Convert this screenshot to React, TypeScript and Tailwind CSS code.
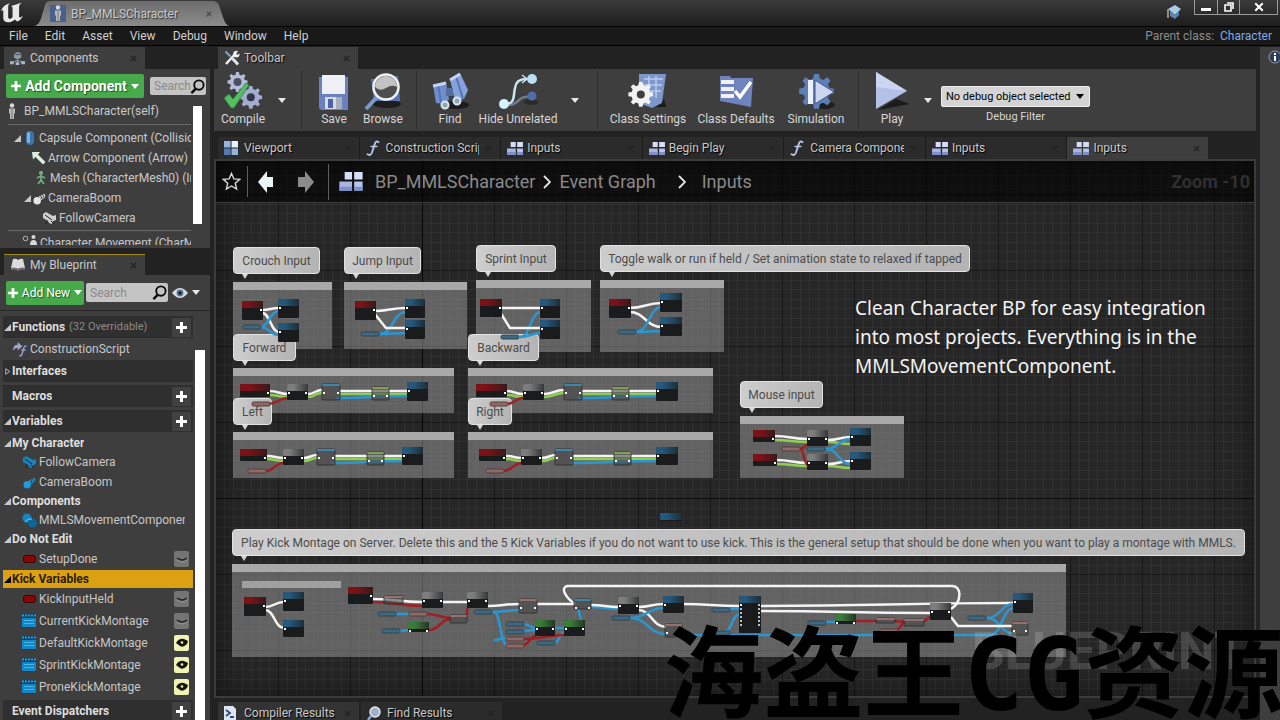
import type { ReactNode } from 'react'

type IconProps = { className?: string }

/* ---------- small icons ---------- */

function Caret({ className = 'w-2 h-[5px] text-gray-200' }: IconProps) {
  return (
    <svg viewBox="0 0 8 5" className={className} fill="currentColor">
      <path d="M0 0h8L4 5z" />
    </svg>
  )
}

function Cross({ className = 'w-[7px] h-[7px] text-[#222222]' }: IconProps) {
  return (
    <svg viewBox="0 0 8 8" className={className} stroke="currentColor" strokeWidth="1.6">
      <path d="M1 1l6 6M7 1L1 7" />
    </svg>
  )
}

function Plus({ className = 'w-[11px] h-[11px] text-white' }: IconProps) {
  return (
    <svg viewBox="0 0 11 11" className={className} fill="currentColor">
      <path d="M4 0h3v4h4v3H7v4H4V7H0V4h4z" />
    </svg>
  )
}

function Expander({ open = true, className = 'text-[#c8c8c8]' }: IconProps & { open?: boolean }) {
  return (
    <svg viewBox="0 0 8 8" className={`size-[7px] shrink-0 ${className}`}>
      {open ? (
        <path d="M8 0v8H0z" fill="currentColor" />
      ) : (
        <path d="M2 .8v6.400L6.500 4z" fill="none" stroke="currentColor" />
      )}
    </svg>
  )
}

function SearchIcon() {
  return (
    <svg viewBox="0 0 16 16" className="size-[15px] shrink-0" fill="none" stroke="#0a0a0a">
      <circle cx="9.500" cy="6.500" r="5" strokeWidth="2" />
      <path d="M6 10.500L1.500 15" strokeWidth="2.600" />
    </svg>
  )
}

function UnrealLogo() {
  return (
    <svg viewBox="0 0 22 20" className="h-[22px] w-6" fill="#e8e8e8">
      <path d="M1 8.500C1.500 5 5 2 9 1c-1.200 1-1.500 2-1.500 3.500v9c0 1.500 1.200 2.300 2.300 1.800.9-.4 1.700-1 1.700-2V5.500c0-1.200-.7-1.700-1.500-2C13 2.800 16.500 1.500 20 .5c-1.800 1.300-2.500 2.300-2.500 4v8.700c0 .8.8 1.200 1.500.8l2-1.500c-1.200 3-3 4.500-5.200 5.300l-2.300-1.900c-1.500 1.700-3.600 2.600-6 2.600-2.600-.2-4.500-1.600-4.500-3.800V8.300C3 7 1.800 7.300 1 8.500z" />
    </svg>
  )
}

function PawnIcon() {
  return (
    <svg viewBox="0 0 8 16" className="h-4 w-2 shrink-0">
      <circle cx="4" cy="2.500" r="2.200" fill="#d9d9d9" />
      <path d="M1 5.500h6v5H6V16H2v-5.500H1z" fill="#b9b9b9" />
      <path d="M4 5.500V16" stroke="#777" />
    </svg>
  )
}

function ComponentsIcon() {
  return (
    <svg viewBox="0 0 16 16" className="size-[15px]">
      <path d="M5 2l3-1 4 1v5L8 9 4 7z" fill="#8e99a8" />
      <path d="M5 3l3 1 4-1" stroke="#39424e" fill="none" />
      <path d="M8 9v4M8 10l-6 2M8 10l6 2" stroke="#9aa" fill="none" />
      <path d="M0 11h4v3H0zM6 12h4v3H6zM12 11h4v3h-4z" fill="#a9b7cb" />
    </svg>
  )
}

function BookIcon() {
  return (
    <svg viewBox="0 0 16 14" className="h-[14px] w-4">
      <path d="M3 1q3-1 5 1 3-2 5-1l2 9q-4-1-7 1-3-2-7-1z" fill="#dcdcdc" />
      <path d="M1 10q4-1 7 1 3-2 7-1v2q-4-1-7 1-3-2-7-1z" fill="#6f6f6f" />
    </svg>
  )
}

function ToolsIcon() {
  return (
    <svg viewBox="0 0 16 16" className="size-4">
      <path d="M2 14L12 3" stroke="#f1f1f1" strokeWidth="2.400" />
      <path d="M10 1.500q3-1.500 4 0l-2 2 1 1.500 2.500-1.500q.5 3-2.500 4-3 0-4-2 0-2.500 1-4z" fill="#f1f1f1" />
      <path d="M1.500 1.500l5 5" stroke="#7ba6de" strokeWidth="2" />
      <path d="M8.500 8.500l5.500 6" stroke="#dfe6f0" strokeWidth="3" />
    </svg>
  )
}

function ViewportIcon() {
  return (
    <svg viewBox="0 0 14 14" className="size-[14px]">
      <path d="M0 0h6.500v6.500H0zM7.500 7.500H14V14H7.500z" fill="#93b5dc" />
      <path d="M7.500 0H14v6.500H7.500z" fill="#eaf3fb" />
      <path d="M0 7.500h6.500V14H0z" fill="#5378b4" />
    </svg>
  )
}

function FunctionIcon({ className = 'h-4 w-[14px]' }: IconProps) {
  return (
    <svg viewBox="0 0 14 16" className={className} fill="none" stroke="#b7c6ee" strokeWidth="1.900" strokeLinecap="round">
      <path d="M12.500 2.200Q10 0 8.800 4L6 12.500Q4.500 16.200 1.500 14.300" />
      <path d="M5 6.500h6" strokeWidth="1.400" />
    </svg>
  )
}

function GraphIcon({ className = 'h-[13px] w-4' }: IconProps) {
  return (
    <svg viewBox="0 0 22 18" className={className}>
      <path d="M5 0h7v7H5zM14 0h8v7h-8z" fill="#d5def6" />
      <path d="M0 9h12v8H0z" fill="#a8b6e2" />
      <path d="M14 9h8v8h-8z" fill="#b9c6ec" />
      <path d="M0 14h12v4H0zM14 14h8v4h-8z" fill="#7f8fca" />
    </svg>
  )
}

function CapsuleIcon() {
  return (
    <svg viewBox="0 0 10 14" className="h-[14px] w-[10px] shrink-0">
      <rect x="1" y="0" width="8" height="14" rx="4" fill="#3b76ab" />
      <rect x="2" y="1" width="3" height="11" rx="1.500" fill="#7fb3dc" />
    </svg>
  )
}

function ArrowCompIcon() {
  return (
    <svg viewBox="0 0 14 13" className="h-[13px] w-[14px] shrink-0">
      <path d="M0 0h8L6 2.500 13.500 10 11 12.500 3.500 5 1 7.500z" fill="#d9efdc" />
    </svg>
  )
}

function MeshIcon() {
  return (
    <svg viewBox="0 0 10 14" className="h-[14px] w-[10px] shrink-0" stroke="#6fae7c" strokeWidth="1.800" fill="none">
      <circle cx="5" cy="2" r="1.200" fill="#9dd3a7" />
      <path d="M5 4v5L2 13M5 9l3 4M1 7l4-2 4 2" />
    </svg>
  )
}

function BoomIcon({ fill = '#e6e6e6' }: { fill?: string }) {
  return (
    <svg viewBox="0 0 14 14" className="size-[13px] shrink-0">
      <circle cx="4.500" cy="9.500" r="4" fill={fill} />
      <path d="M7 6l6-3" stroke={fill} strokeWidth="3" strokeDasharray="1.500 1" />
      <path d="M8 9l5-4" stroke={fill} />
    </svg>
  )
}

function CameraIcon({ fill = '#cfcfcf' }: { fill?: string }) {
  return (
    <svg viewBox="0 0 15 13" className="h-[13px] w-[15px] shrink-0">
      <path d="M1 2l3-2 7 4 3-1v5l-3 1-1 3-3-1-1-2-5-3z" fill={fill} />
      <path d="M3 3l7 5M5 8l-1 4M9 9l3 3" stroke="#222" />
    </svg>
  )
}

function MoveCompIcon({ fill = '#1486c4' }: { fill?: string }) {
  return (
    <svg viewBox="0 0 15 15" className="size-[15px] shrink-0">
      <circle cx="5" cy="5" r="4.500" fill={fill} />
      <circle cx="10.500" cy="10" r="4.500" fill="#0e6597" />
      <path d="M3 9q3-4 7-3" stroke="#79c5ee" fill="none" />
    </svg>
  )
}

function PersonIcon() {
  return (
    <svg viewBox="0 0 16 12" className="h-3 w-4 shrink-0">
      <circle cx="3.500" cy="3.500" r="2.300" fill="none" stroke="#b5b5b5" />
      <circle cx="11.500" cy="2" r="2" fill="#d8d8d8" />
      <path d="M8 10q0-5 3.500-5T15 10z" fill="#d8d8d8" />
    </svg>
  )
}

function BoolIcon() {
  return <span className="h-2 w-[13px] shrink-0 rounded-[3px] border border-[#3c0000] bg-[#8c0505]" />
}

function MontageIcon() {
  return (
    <svg viewBox="0 0 14 14" className="size-[14px] shrink-0">
      <rect width="14" height="14" fill="#0d3f5e" />
      <rect y="4" width="14" height="9" fill="#1188c8" />
      <path d="M2 6.500h10M2 9.500h10" stroke="#4cb1e4" />
      <path d="M0 1.500h14" stroke="#2a9bd6" strokeWidth="2" strokeDasharray="2 1" />
    </svg>
  )
}

function ConstructionIcon() {
  return (
    <svg viewBox="0 0 16 16" className="size-[15px] shrink-0" fill="none">
      <path d="M0 9q0-6 5-6V0l5 4.500L5 9V6Q2 6 0 9z" fill="#9fa8c9" />
      <path d="M14.500 4.500q-2-1-3 2l-1.800 6q-.7 3-3 2M9 8.500h4.500" stroke="#8fa3e0" strokeWidth="1.500" />
    </svg>
  )
}

function EyeIcon() {
  return (
    <svg viewBox="0 0 16 12" className="h-3 w-4">
      <path d="M0 6q8-10 16 0q-8 10-16 0z" fill="#d6dbe2" />
      <circle cx="8" cy="6" r="3.400" fill="#4f7396" />
      <circle cx="8" cy="6" r="1.500" fill="#111" />
    </svg>
  )
}

function VisibilityToggle({ on, name }: { on: boolean; name: string }) {
  return (
    <button
      aria-label={`${name} visibility`}
      className={`flex h-4 w-[15px] items-center justify-center rounded-[2px] ${on ? 'bg-[#f1f3b5]' : 'bg-[#747474]'}`}
    >
      {on ? (
        <svg viewBox="0 0 12 10" className="h-[10px] w-3">
          <path d="M0 5q3-5 8-4l4 2-1 3q-4 4-7 2z" fill="#15150c" />
          <circle cx="6" cy="4.500" r="1.300" fill="#f1f3b5" />
        </svg>
      ) : (
        <svg viewBox="0 0 12 10" className="h-[10px] w-3" fill="none">
          <path d="M1 4q5 4 10 0" stroke="#222" strokeWidth="1.500" />
          <path d="M1 6q5 4 10 0" stroke="#999" />
        </svg>
      )}
    </button>
  )
}

/* ---------- toolbar icons ---------- */

const GEAR =
  'M8.500 0h3l.6 2.800 2 .8L16.500 2l2 2-1.600 2.400.8 2 2.800.6v3l-2.800.6-.8 2 1.600 2.400-2 2-2.400-1.600-2 .8-.6 2.800h-3l-.6-2.800-2-.8L3.500 19l-2-2 1.600-2.400-.8-2L-.5 12V9l2.800-.6.8-2L1.500 4l2-2 2.400 1.600 2-.8z'

function CompileIcon() {
  return (
    <svg viewBox="0 0 40 40" className="size-10">
      <path d={GEAR} transform="translate(5 1) scale(.95)" fill="#b5bcda" />
      <circle cx="14.500" cy="11" r="4" fill="#4a4f63" />
      <path d={GEAR} transform="translate(17 15) scale(1.080)" fill="#a4acd0" />
      <circle cx="27.800" cy="26.300" r="4" fill="#33374a" />
      <path d="M1 27l5-4 4 5L23 12l3 2-15 23H8z" fill="#55bd62" stroke="#2b7a37" strokeWidth=".7" />
    </svg>
  )
}

function SaveIcon() {
  return (
    <svg viewBox="0 0 40 40" className="size-10">
      <path d="M5 4h28l1 1v34H7l-2-2z" fill="#6a81bf" />
      <path d="M8 4h23v19H8z" fill="#eef0f5" />
      <path d="M11 26h17v12H11z" fill="#d8dbe5" />
      <path d="M14 28h5v9h-5z" fill="#4d64a8" />
      <path d="M22 26h6v12h-6z" fill="#a9aebd" />
      <path d="M5 5h3M31 5h3" stroke="#33406e" strokeWidth="2" />
    </svg>
  )
}

function BrowseIcon() {
  return (
    <svg viewBox="0 0 40 40" className="size-10">
      <ellipse cx="24" cy="33" rx="14" ry="4" fill="#1d1d1d" />
      <path d="M8 8h5l2-3h20l2 25H11z" fill="#5a76b2" />
      <path d="M14 26L3 38" stroke="#7d98cf" strokeWidth="4" />
      <circle cx="23" cy="16" r="12.500" fill="#4e4e4e" stroke="#f2f2f2" strokeWidth="2.500" />
      <path d="M12 16a11 11 0 0 1 22 0q-5-3-11 1t-11-1z" fill="#c3c3c3" />
    </svg>
  )
}

function FindIcon() {
  return (
    <svg viewBox="0 0 40 40" className="size-10">
      <ellipse cx="26" cy="34" rx="13" ry="4" fill="#1d1d1d" />
      <path d="M3 14l13-3 3 17-4 5-9-1z" fill="#6f8ece" />
      <path d="M20 8l10-6 8 17-4 9-9 2z" fill="#86a2dc" />
      <path d="M8 13l3 19M26 5l7 23" stroke="#5674b5" strokeWidth="2" />
      <path d="M3 15l13-3M20 9l10-6" stroke="#c5d4f2" strokeWidth="3" />
      <path d="M16 17h7v8h-7z" fill="#55709f" />
      <circle cx="15" cy="34" r="3.500" fill="#8aa" stroke="#dce6f5" strokeWidth="2" />
      <circle cx="27" cy="30" r="3.500" fill="#8aa" stroke="#dce6f5" strokeWidth="2" />
    </svg>
  )
}

function HideIcon() {
  return (
    <svg viewBox="0 0 40 40" className="size-10" fill="none">
      <ellipse cx="33" cy="31" rx="7" ry="3" fill="#2a2a2a" />
      <path d="M8 34q10 0 14-6 4-3 10-2" stroke="#6b7f93" strokeWidth="2.500" />
      <path d="M7 33C18 33 15 24 17 17Q18 8 28 8" stroke="#c9e5f1" strokeWidth="2.500" />
      <path d="M24 4l5 4-5 4" stroke="#c9e5f1" strokeWidth="1.500" />
      <circle cx="6" cy="33" r="5" fill="#d5f1fa" />
      <circle cx="34" cy="8" r="5" fill="#b9dff0" />
      <circle cx="34" cy="25" r="4.500" fill="#4f6da6" />
    </svg>
  )
}

function ClassSettingsIcon() {
  return (
    <svg viewBox="0 0 40 40" className="size-10">
      <path d="M28 36h10l-2-8z" fill="#1b1b1b" />
      <path d="M11 3h27l-4 29-10 5-13-5z" fill="#7d96cc" />
      <path d="M16 8h19M15 14h19M15 20h18M21 5v22M28 5v22" stroke="#bccbee" strokeWidth="1.500" />
      <path d={GEAR} transform="translate(1 11) scale(1.180)" fill="#f2f2f2" />
      <circle cx="12.800" cy="23.400" r="4" fill="#3e3e3e" />
    </svg>
  )
}

function ClassDefaultsIcon() {
  return (
    <svg viewBox="0 0 40 40" className="size-10">
      <path d="M4 5h10l1 2h22l-2 29-31-6z" fill="#6f83be" />
      <path d="M5 9h13v4H5zM5 16h13v4H5zM5 23h13v4H5z" fill="#f0f1f5" />
      <path d="M19 20l5 6L35 11" stroke="#fff" strokeWidth="3.500" fill="none" />
    </svg>
  )
}

function SimulationIcon() {
  return (
    <svg viewBox="0 0 40 40" className="size-10">
      <ellipse cx="28" cy="34" rx="11" ry="4" fill="#1f1f1f" />
      <path d={GEAR} transform="translate(4 3) scale(1.650)" fill="#5d7fb9" />
      <path d="M12 9h5v24h-5z" fill="#eef0f7" />
      <path d="M19 9l19 12-19 12z" fill="#cdd6ee" stroke="#38558f" />
    </svg>
  )
}

function PlayIcon() {
  return (
    <svg viewBox="0 0 40 40" className="size-10">
      <path d="M6 39l32-6-14-5z" fill="#1c1c1c" />
      <path d="M4 1l31 19L4 38z" fill="#b4c1e6" />
      <path d="M4 1l31 19L4 16z" fill="#ccd6f2" />
    </svg>
  )
}

/* ---------- panels ---------- */

function Tab({ icon, label, className = '' }: { icon: ReactNode; label: string; className?: string }) {
  return (
    <div className={`flex min-w-0 items-center pl-1.5 pr-2 ${className}`}>
      <span className="flex w-[18px] shrink-0 items-center">{icon}</span>
      <span className="ml-0.5 flex-1 overflow-hidden whitespace-nowrap">{label}</span>
      <button aria-label={`Close ${label}`} className="ml-1.5 shrink-0">
        <Cross />
      </button>
    </div>
  )
}

function ComponentsPanel() {
  return (
    <section>
      <Tab icon={<ComponentsIcon />} label="Components" className="ml-1 h-[22px] w-[141px] bg-[#3e3e3e]" />
      <div className="flex h-[179px] flex-col overflow-hidden bg-[#3e3e3e] pt-[5px]">
        <div className="flex items-center gap-1.5 pl-1.5 pr-1">
          <button className="flex h-6 w-[138px] shrink-0 items-center justify-center gap-1 rounded-[2px] bg-[#46a94a] text-[14px] font-bold text-white [text-shadow:1px_1px_1px_#1b5a1e]">
            <Plus className="h-2.5 w-2.5" />
            Add Component
            <Caret className="h-[5px] w-2 text-white" />
          </button>
          <label className="flex h-[18px] min-w-0 flex-1 items-center rounded-[2px] bg-[#c4c4c4] pl-1 pr-px">
            <input aria-label="Search components" placeholder="Search" className="w-full min-w-0 bg-transparent text-black placeholder:text-[#8b8b8b]" />
            <SearchIcon />
          </label>
        </div>
        <div className="mt-1 flex min-h-0 flex-1 px-2">
          <div className="min-w-0 flex-1 overflow-hidden whitespace-nowrap">
            <div className="mb-1 flex h-[18px] items-center gap-2">
              <PawnIcon />
              BP_MMLSCharacter(self)
            </div>
            <div className="mb-[3px] border-t border-[#696969]" />
            <div className="flex h-5 items-center gap-1 pl-1.5">
              <Expander />
              <CapsuleIcon />
              Capsule Component (Collision)
            </div>
            <div className="flex h-5 items-center gap-0.5 pl-6">
              <ArrowCompIcon />
              Arrow Component (Arrow) (Inherited)
            </div>
            <div className="flex h-5 items-center gap-1 pl-7">
              <MeshIcon />
              Mesh (CharacterMesh0) (Inherited)
            </div>
            <div className="flex h-5 items-center gap-0.5 pl-4">
              <Expander />
              <BoomIcon />
              CameraBoom
            </div>
            <div className="flex h-5 items-center gap-0.5 pl-[34px]">
              <CameraIcon />
              FollowCamera
            </div>
            <div className="mb-1 mt-0.5 border-t border-[#696969]" />
            <div className="flex h-2.5 items-start gap-0.5 overflow-hidden pl-3.5">
              <PersonIcon />
              Character Movement (CharMoveComp)
            </div>
          </div>
          <div className="ml-0.5 mt-1 h-[118px] w-[9px] bg-white" />
        </div>
      </div>
    </section>
  )
}

type RowKind = 'header' | 'group' | 'item'
type BlueprintRow = {
  kind: RowKind
  label: string
  note?: string
  icon?: ReactNode
  add?: boolean
  open?: boolean
  selected?: boolean
  visible?: boolean
  className?: string
}

const rows: BlueprintRow[] = [
  { kind: 'header', label: 'Functions', note: '(32 Overridable)', open: true, add: true, className: 'h-[22px]' },
  { kind: 'item', label: 'ConstructionScript', icon: <ConstructionIcon />, className: 'h-[22px] pl-[9px]' },
  { kind: 'header', label: 'Interfaces', open: false, className: 'mb-[3px] h-[22px]' },
  { kind: 'header', label: 'Macros', add: true, className: 'mb-[3px] h-[22px]' },
  { kind: 'header', label: 'Variables', open: true, add: true, className: 'mb-0.5 h-[22px]' },
  { kind: 'group', label: 'My Character', className: 'h-[18px]' },
  { kind: 'item', label: 'FollowCamera', icon: <CameraIcon fill="#1583bd" />, className: 'h-5 pl-[18px]' },
  { kind: 'item', label: 'CameraBoom', icon: <BoomIcon fill="#1f9ade" />, className: 'h-5 pl-[18px]' },
  { kind: 'group', label: 'Components', className: 'h-[18px]' },
  { kind: 'item', label: 'MMLSMovementComponent', icon: <MoveCompIcon />, className: 'h-5 pl-[18px]' },
  { kind: 'group', label: 'Do Not Edit', className: 'h-[18px]' },
  { kind: 'item', label: 'SetupDone', icon: <BoolIcon />, visible: false, className: 'h-[22px] pl-[18px]' },
  { kind: 'group', label: 'Kick Variables', selected: true, className: 'h-[18px]' },
  { kind: 'item', label: 'KickInputHeld', icon: <BoolIcon />, visible: false, className: 'h-[22px] pl-[18px]' },
  { kind: 'item', label: 'CurrentKickMontage', icon: <MontageIcon />, visible: false, className: 'h-[22px] pl-[18px]' },
  { kind: 'item', label: 'DefaultKickMontage', icon: <MontageIcon />, visible: true, className: 'h-[22px] pl-[18px]' },
  { kind: 'item', label: 'SprintKickMontage', icon: <MontageIcon />, visible: true, className: 'h-[22px] pl-[18px]' },
  { kind: 'item', label: 'ProneKickMontage', icon: <MontageIcon />, visible: true, className: 'mb-0.5 h-[22px] pl-[18px]' },
  { kind: 'header', label: 'Event Dispatchers', add: true, className: 'h-[22px]' },
]

function Row({ row }: { row: BlueprintRow }) {
  const tone = row.selected
    ? 'bg-[#dba112] font-bold text-[#2b1d00]'
    : row.kind === 'header'
      ? 'bg-[#2f2f2f] font-bold text-[#dedede]'
      : row.kind === 'group'
        ? 'font-bold text-[#dedede]'
        : 'text-[#c6c6c6]'
  return (
    <div className={`flex shrink-0 items-center overflow-hidden whitespace-nowrap ${tone} ${row.className}`}>
      {row.kind === 'item' ? (
        <span className="mr-0.5 flex w-4 shrink-0 items-center justify-center">{row.icon}</span>
      ) : (
        <span className="flex w-[9px] shrink-0 items-center pl-px">
          {(row.kind === 'group' || row.open !== undefined) && (
            <Expander open={row.open ?? true} className={row.selected ? 'text-black' : 'text-[#c8c8c8]'} />
          )}
        </span>
      )}
      <span className="overflow-hidden">{row.label}</span>
      {row.note && <span className="ml-1 text-[11px] font-normal text-[#8a8a8a]">{row.note}</span>}
      {row.add && (
        <button aria-label={`Add to ${row.label}`} className="ml-auto mr-0.5 flex h-[19px] w-[19px] items-center justify-center bg-[#414141]">
          <Plus />
        </button>
      )}
      {row.visible !== undefined && (
        <span className="ml-auto mr-1">
          <VisibilityToggle on={row.visible} name={row.label} />
        </span>
      )}
      {row.label === 'MMLSMovementComponent' && <span className="w-2 shrink-0" />}
    </div>
  )
}

function BlueprintPanel() {
  return (
    <section className="mt-1.5 flex min-h-0 flex-1 flex-col">
      <Tab
        icon={<BookIcon />}
        label="My Blueprint"
        className="ml-1 h-[21px] w-[141px] shrink-0 border-t border-[#a08a1a] bg-[#3e3e3e]"
      />
      <div className="flex min-h-0 flex-1 flex-col bg-[#3e3e3e]">
        <div className="flex h-9 shrink-0 items-center border-b border-[#262626] px-1.5">
          <button className="flex h-6 w-[78px] items-center justify-center gap-1 rounded-[2px] bg-[#46a94a] text-white [text-shadow:1px_1px_1px_#1b5a1e]">
            <Plus className="h-2.5 w-2.5" />
            Add New
            <Caret className="h-[5px] w-2 text-white" />
          </button>
          <label className="ml-0.5 flex h-[19px] w-[82px] items-center rounded-[2px] bg-[#c4c4c4] pl-1 pr-px">
            <input aria-label="Search blueprint" placeholder="Search" className="w-full min-w-0 bg-transparent text-black placeholder:text-[#8b8b8b]" />
            <SearchIcon />
          </label>
          <button aria-label="View options" className="ml-1 flex items-center gap-1">
            <EyeIcon />
            <Caret />
          </button>
        </div>
        <div className="flex min-h-0 flex-1 pl-[3px] pt-[5px]">
          <div className="flex w-[190px] shrink-0 flex-col overflow-hidden">
            {rows.map((row) => (
              <Row key={row.label} row={row} />
            ))}
          </div>
          <div className="ml-0.5 mt-[34px] w-2.5 bg-white" />
        </div>
      </div>
    </section>
  )
}

function Tool({ icon, label, className }: { icon: ReactNode; label: string; className: string }) {
  return (
    <button className={`flex flex-col items-center whitespace-nowrap ${className}`}>
      {icon}
      <span className="leading-4">{label}</span>
    </button>
  )
}

function ToolMenu({ name, className }: { name: string; className: string }) {
  return (
    <button aria-label={`${name} options`} className={`flex items-center justify-center ${className}`}>
      <Caret />
    </button>
  )
}

function Toolbar() {
  return (
    <section>
      <Tab icon={<ToolsIcon />} label="Toolbar" className="ml-1 h-[22px] w-[140px] bg-[#3e3e3e] [text-shadow:1px_1px_1px_#000]" />
      <div className="flex h-[62px] bg-[#3e3e3e] py-0.5 text-[#d6d6d6] [text-shadow:1px_1px_1px_#000]">
        <div className="flex w-[88px] border-r border-[#2b2b2b]">
          <Tool icon={<CompileIcon />} label="Compile" className="w-[58px]" />
          <ToolMenu name="Compile" className="w-5" />
        </div>
        <div className="flex border-r border-[#2b2b2b] px-2">
          <Tool icon={<SaveIcon />} label="Save" className="w-12" />
          <Tool icon={<BrowseIcon />} label="Browse" className="w-[50px]" />
        </div>
        <div className="flex border-r border-[#2b2b2b] px-2">
          <Tool icon={<FindIcon />} label="Find" className="w-[50px]" />
          <Tool icon={<HideIcon />} label="Hide Unrelated" className="w-[86px]" />
          <ToolMenu name="Hide Unrelated" className="w-7" />
        </div>
        <div className="flex border-r border-[#2b2b2b] px-1.5">
          <Tool icon={<ClassSettingsIcon />} label="Class Settings" className="w-[88px]" />
          <Tool icon={<ClassDefaultsIcon />} label="Class Defaults" className="w-[88px]" />
          <Tool icon={<SimulationIcon />} label="Simulation" className="w-[72px]" />
        </div>
        <div className="flex pl-2">
          <Tool icon={<PlayIcon />} label="Play" className="w-[50px]" />
          <ToolMenu name="Play" className="w-[22px]" />
          <div className="ml-0.5 flex flex-col items-center pt-[15px]">
            <div className="relative">
              <select
                id="debug-filter"
                className="h-[21px] w-[149px] appearance-none rounded-[2px] border border-[#f0f0f0] bg-[#d4d4d4] pl-1 text-[11px] text-black [text-shadow:none]"
              >
                <option>No debug object selected</option>
              </select>
              <Caret className="pointer-events-none absolute right-1.5 top-2 h-[5px] w-2 text-black" />
            </div>
            <label htmlFor="debug-filter" className="text-[11px] leading-5 [text-shadow:none]">
              Debug Filter
            </label>
          </div>
        </div>
      </div>
    </section>
  )
}

/* ---------- graph ---------- */

const comments = [
  { text: 'Crouch Input', x: 233, y: 247, w: 87, box: [233, 282, 99, 67] },
  { text: 'Jump Input', x: 344, y: 247, w: 77, box: [344, 282, 123, 67] },
  { text: 'Sprint Input', x: 476, y: 245, w: 80, box: [476, 280, 115, 72] },
  { text: 'Toggle walk or run if held / Set animation state to relaxed if tapped', x: 600, y: 245, w: 370, box: [600, 280, 124, 72] },
  { text: 'Forward', x: 233, y: 334, w: 63, box: [233, 368, 221, 45] },
  { text: 'Backward', x: 468, y: 334, w: 71, box: [468, 368, 245, 45] },
  { text: 'Left', x: 233, y: 398, w: 39, box: [233, 432, 221, 46] },
  { text: 'Right', x: 468, y: 398, w: 44, box: [468, 432, 245, 46] },
  { text: 'Mouse input', x: 740, y: 381, w: 83, box: [740, 416, 164, 62] },
  {
    text: 'Play Kick Montage on Server. Delete this and the 5 Kick Variables if you do not want to use kick. This is the general setup that should be done when you want to play a montage with MMLS.',
    x: 232,
    y: 529,
    w: 1013,
    box: [232, 564, 834, 93],
  },
]

type NodeKind = 'event' | 'func' | 'flow' | 'pure' | 'cast' | 'bridge' | 'math'
type GraphNode = [NodeKind, number, number, number, number]

const nodes: GraphNode[] = [
  ['event', 242, 301, 21, 19], ['func', 278, 299, 21, 19], ['func', 278, 323, 21, 19],
  ['event', 355, 301, 21, 19], ['func', 405, 299, 20, 19], ['func', 405, 320, 20, 19],
  ['event', 480, 299, 22, 18], ['func', 540, 299, 20, 19], ['func', 540, 320, 20, 19],
  ['event', 609, 299, 22, 19], ['func', 660, 293, 22, 19], ['func', 660, 317, 22, 19],
  ['event', 240, 384, 30, 13], ['flow', 287, 384, 21, 16], ['bridge', 322, 384, 18, 16], ['math', 372, 387, 17, 13], ['func', 407, 382, 21, 19],
  ['event', 476, 384, 31, 13], ['flow', 523, 384, 21, 16], ['bridge', 564, 384, 18, 16], ['math', 612, 387, 17, 13], ['func', 656, 382, 22, 19],
  ['event', 240, 449, 27, 12], ['flow', 283, 449, 21, 16], ['bridge', 317, 449, 18, 16], ['math', 367, 452, 17, 13], ['func', 402, 447, 21, 18],
  ['event', 479, 449, 27, 12], ['flow', 521, 449, 21, 16], ['bridge', 555, 449, 18, 16], ['math', 614, 452, 17, 13], ['func', 656, 447, 22, 18],
  ['event', 753, 430, 22, 12], ['flow', 807, 430, 21, 16], ['func', 850, 428, 21, 18],
  ['event', 753, 454, 24, 12], ['flow', 807, 454, 21, 16], ['func', 850, 452, 21, 18],
  ['func', 660, 513, 22, 8],
  ['event', 244, 597, 22, 19], ['func', 283, 592, 21, 19], ['func', 283, 620, 21, 17],
  ['event', 348, 587, 25, 17], ['cast', 384, 596, 19, 8], ['flow', 422, 592, 21, 16], ['flow', 467, 592, 21, 16],
  ['cast', 519, 599, 18, 14], ['bridge', 574, 599, 17, 10], ['flow', 618, 597, 21, 17], ['func', 663, 596, 21, 17],
  ['cast', 665, 624, 17, 13], ['func', 739, 596, 22, 37], ['pure', 408, 622, 21, 10], ['cast', 450, 615, 17, 8],
  ['pure', 535, 620, 20, 16], ['pure', 564, 620, 21, 16], ['pure', 835, 614, 21, 10], ['cast', 876, 618, 19, 5],
  ['cast', 904, 619, 20, 7], ['flow', 930, 603, 21, 17], ['func', 1013, 593, 20, 20], ['cast', 1012, 622, 16, 13],
]

type Point = [number, number]

const bluePills: Point[] = [
  [243, 325], [361, 332], [501, 335], [618, 330], [807, 447], [378, 612], [382, 629], [474, 610], [506, 622], [506, 630],
  [537, 641], [612, 616], [712, 608], [712, 631], [808, 621], [968, 616],
]
const redPills: Point[] = [
  [252, 402], [490, 402], [248, 469], [486, 469], [782, 447], [409, 612], [506, 637], [506, 644], [880, 629],
]

const WHITE = '#f4f4f4'
const BLUE = '#2a97d3'
const RED = '#a01f24'
const GREEN = '#8fd14f'

type Wire = [string, number, number, number, number]

const wires: Wire[] = [
  [WHITE, 262, 310, 279, 308], [WHITE, 262, 313, 279, 332], [BLUE, 260, 327, 279, 311], [BLUE, 260, 327, 279, 335],
  [WHITE, 374, 311, 406, 308], [BLUE, 380, 334, 406, 312], [BLUE, 380, 334, 406, 333],
  [WHITE, 500, 308, 541, 308], [BLUE, 520, 337, 541, 312], [BLUE, 520, 337, 541, 333],
  [WHITE, 629, 308, 662, 303], [WHITE, 629, 312, 662, 327], [BLUE, 636, 332, 662, 307], [BLUE, 636, 332, 662, 331],
  // forward / backward
  [GREEN, 269, 395, 288, 397], [WHITE, 269, 391, 288, 394], [GREEN, 308, 397, 322, 393], [WHITE, 308, 394, 322, 390],
  [GREEN, 340, 394, 407, 394], [WHITE, 340, 391, 407, 391], [BLUE, 336, 398, 407, 396], [RED, 268, 404, 288, 398],
  [GREEN, 506, 395, 523, 397], [WHITE, 506, 391, 523, 394], [GREEN, 544, 397, 564, 393], [WHITE, 544, 394, 564, 390],
  [GREEN, 582, 394, 656, 394], [WHITE, 582, 391, 656, 391], [BLUE, 578, 398, 656, 396], [RED, 507, 404, 523, 398],
  // left / right
  [GREEN, 267, 459, 284, 461], [WHITE, 267, 456, 284, 458], [GREEN, 304, 461, 317, 458], [WHITE, 304, 458, 317, 455],
  [GREEN, 335, 459, 402, 459], [WHITE, 335, 456, 402, 456], [BLUE, 331, 463, 402, 461], [RED, 265, 471, 284, 463],
  [GREEN, 506, 459, 522, 461], [WHITE, 506, 456, 522, 458], [GREEN, 542, 461, 556, 458], [WHITE, 542, 458, 556, 455],
  [GREEN, 573, 459, 656, 459], [WHITE, 573, 456, 656, 456], [BLUE, 570, 463, 656, 461], [RED, 503, 471, 522, 463],
  // mouse
  [GREEN, 774, 440, 808, 442], [WHITE, 774, 436, 808, 439], [GREEN, 828, 442, 851, 444], [WHITE, 828, 440, 851, 437],
  [GREEN, 776, 464, 808, 466], [WHITE, 776, 460, 808, 463], [GREEN, 828, 466, 851, 468], [WHITE, 828, 464, 851, 461],
  [RED, 800, 449, 808, 445], [RED, 800, 449, 808, 465], [BLUE, 826, 449, 851, 439], [BLUE, 826, 449, 851, 464],
  // kick
  [WHITE, 265, 607, 284, 602], [WHITE, 265, 610, 284, 628], [RED, 372, 602, 423, 606], [WHITE, 372, 599, 423, 602],
  [WHITE, 442, 602, 468, 602], [WHITE, 487, 606, 520, 604], [WHITE, 537, 604, 575, 604], [BLUE, 591, 607, 619, 609],
  [WHITE, 591, 605, 619, 607], [WHITE, 638, 607, 664, 604], [WHITE, 638, 610, 666, 627], [WHITE, 683, 604, 740, 606],
  [WHITE, 760, 606, 1014, 603], [WHITE, 760, 611, 931, 613], [BLUE, 395, 614, 410, 614], [BLUE, 399, 631, 409, 630],
  [BLUE, 491, 612, 520, 610], [BLUE, 494, 612, 507, 645], [BLUE, 494, 640, 507, 638], [BLUE, 523, 624, 536, 628],
  [BLUE, 523, 631, 536, 630], [BLUE, 554, 628, 565, 628], [BLUE, 554, 643, 565, 632], [BLUE, 582, 620, 577, 608],
  [BLUE, 630, 618, 664, 608], [BLUE, 630, 618, 666, 634], [BLUE, 729, 609, 740, 609], [BLUE, 724, 632, 740, 614],
  [BLUE, 682, 635, 990, 635], [BLUE, 825, 622, 836, 622], [BLUE, 987, 618, 1014, 604], [BLUE, 987, 618, 1013, 633],
  [BLUE, 990, 635, 1014, 608],
  [RED, 429, 630, 451, 619], [RED, 427, 614, 451, 618], [RED, 466, 618, 468, 607], [RED, 523, 639, 565, 635],
  [RED, 523, 645, 536, 636], [RED, 856, 621, 877, 621], [RED, 894, 621, 905, 622], [RED, 896, 630, 905, 623],
  [RED, 923, 621, 931, 617],
]

const loops = [
  'M374 313L386 328H406',
  'M500 312L510 328H541',
  'M575 604C566 598 560 588 567 586H952C962 586 962 602 951 609',
  'M951 617L958 626H1013',
]

const headerFill: Record<NodeKind, string> = {
  event: '#7d1216',
  func: '#25587b',
  flow: '#7d7d7d',
  pure: '#3c7a3a',
  cast: '#94716e',
  bridge: '#3d86ab',
  math: '#7fa052',
}

function MiniNode({ node: [kind, x, y, w, h] }: { node: GraphNode }) {
  const solid = kind === 'event' || kind === 'func' || kind === 'flow' || kind === 'pure'
  const head = Math.min(solid ? 7 : 2, h)
  return (
    <g>
      <rect
        x={x}
        y={y}
        width={w}
        height={h}
        rx="1"
        fill={solid ? '#191b1c' : '#484848'}
        fillOpacity={solid ? 1 : 0.6}
        stroke="#2a2a2a"
        strokeOpacity={solid ? 0 : 0.8}
      />
      <rect x={x} y={y} width={w} height={head} rx="1" fill={headerFill[kind]} />
      {solid && <rect x={x} y={y} width={w} height={head} fill="url(#shade)" />}
      {h > 8 && kind !== 'event' && <rect x={x + 1} y={y + 8} width="2" height="2" fill="#fff" />}
      {h > 8 && kind !== 'func' && <rect x={x + w - 3} y={y + 8} width="2" height="2" fill="#fff" />}
      {h > 30 && <path d={`M${x + 2} ${y + 12}v20M${x + w - 2} ${y + 8}v24`} stroke="#b5c4cc" strokeWidth="2" strokeDasharray="2 2" />}
    </g>
  )
}

function wirePath([, x1, y1, x2, y2]: Wire) {
  const mid = (x1 + x2) / 2
  return `M${x1} ${y1}C${mid} ${y1} ${mid} ${y2} ${x2} ${y2}`
}

// grid cell: 8 minor lines, the first one is the dark major line
const minorX = [9, 18, 27, 36, 45, 54, 63]
const minorY = [10, 19, 29, 38, 48, 57, 67]

function Grid() {
  return (
    <svg className="absolute inset-0 size-full">
      <defs>
        <pattern id="grid" width="72" height="76" x="62" y="33" patternUnits="userSpaceOnUse">
          <rect width="72" height="76" fill="#262626" />
          {minorX.map((x) => (
            <rect key={x} x={x} width="1" height="76" fill="#303030" />
          ))}
          {minorY.map((y) => (
            <rect key={y} y={y} width="72" height="1" fill="#303030" />
          ))}
          <rect width="1" height="76" fill="#171717" />
          <rect width="72" height="1" fill="#171717" />
        </pattern>
      </defs>
      <rect width="100%" height="100%" fill="url(#grid)" />
      <rect x="206" width="1" height="100%" fill="#050505" />
      <rect y="337" width="100%" height="1" fill="#0c0c0c" />
    </svg>
  )
}

function Graph() {
  return (
    <div className="relative min-h-0 flex-1 overflow-hidden border-2 border-[#3b3b3b] bg-[#262626]">
      <Grid />
      <div className="absolute inset-0 shadow-[inset_0_0_30px_rgba(0,0,0,0.5)]" />
      {/* panned graph space */}
      <div className="absolute -left-[216px] -top-[161px]">
        {comments.map(({ text, box: [x, y, w, h] }) => (
          <div key={text} className="absolute bg-[#9d9d9d]/50" style={{ left: x, top: y, width: w, height: h }}>
            <div className="h-2 bg-[#a9a9a9]" />
          </div>
        ))}
        <div className="absolute left-[242px] top-[581px] h-[7px] w-[99px] bg-[#a0a0a0]" />
        {comments.map(({ text, x, y, w }) => (
          <div
            key={text}
            className="absolute flex h-[27px] items-center justify-center whitespace-nowrap rounded border border-[#e3e3e3] bg-linear-to-r from-[#cdcdcd] to-[#b4b4b4] text-[12px] text-[#4c4c4c]"
            style={{ left: x, top: y, width: w }}
          >
            {text}
            <span className="absolute left-2 top-[26px] border-x-[3px] border-t-[5px] border-x-transparent border-t-[#d6d6d6]" />
          </div>
        ))}
        <svg className="absolute left-0 top-0 overflow-visible" width="1280" height="720">
          <defs>
            <linearGradient id="shade">
              <stop offset="0.3" stopColor="#191b1c" stopOpacity="0" />
              <stop offset="1" stopColor="#191b1c" stopOpacity="0.7" />
            </linearGradient>
          </defs>
          <g fill="none" strokeWidth="2.500">
            {wires.map((wire, i) => (
              <path key={i} d={wirePath(wire)} stroke={wire[0]} />
            ))}
            {loops.map((d) => (
              <path key={d} d={d} stroke={WHITE} />
            ))}
          </g>
          {nodes.map((node, i) => (
            <MiniNode key={i} node={node} />
          ))}
          {bluePills.map(([x, y]) => (
            <rect key={`${x}-${y}`} x={x} y={y} width="18" height="4" rx="1.500" fill="#3d6a82" stroke="#32434d" />
          ))}
          {redPills.map(([x, y]) => (
            <rect key={`${x}-${y}`} x={x} y={y} width="18" height="4" rx="1.500" fill="#8b6a6a" stroke="#5b3a3a" />
          ))}
        </svg>
        <p className="absolute left-[855px] top-[294px] w-[380px] font-['Noto_Sans',sans-serif] text-[19px] leading-[29px] text-[#f4f4f4]">
          Clean Character BP for easy integration
          <br />
          into most projects. Everything is in the
          <br />
          MMLSMovementComponent.
        </p>
      </div>
      <div className="absolute bottom-[18px] right-2 text-[52px] font-bold leading-none text-white/15">BLUEPRINT</div>
      <header className="relative flex h-[42px] items-center border-b border-[#3a3a3a] bg-black/60 text-[18px] text-[#8a8a8a]">
        <button aria-label="Favorite" className="flex w-8 justify-center border-r border-[#606060] py-1.5">
          <svg viewBox="0 0 20 20" className="size-[19px]" fill="none" stroke="#d8d8d8" strokeWidth="1.500">
            <path d="M10 1.500l2.500 5.800 6.200.5-4.700 4.100 1.400 6.100-5.400-3.300L4.600 18 6 11.900 1.300 7.800l6.200-.5z" />
          </svg>
        </button>
        <button aria-label="Back" className="flex w-9 justify-center">
          <svg viewBox="0 0 16 22" className="h-[22px] w-4">
            <path d="M0 11l9-11v6h6v10H9v6z" fill="#e9f3f5" />
          </svg>
        </button>
        <button aria-label="Forward" className="ml-1.5 flex w-8 justify-center">
          <svg viewBox="0 0 16 22" className="h-[22px] w-4">
            <path d="M16 11L7 0v6H0v10h7v6z" fill="#8b8b8b" />
          </svg>
        </button>
        <span className="ml-1.5 h-9 border-l border-[#606060]" />
        <GraphIcon className="ml-2.5 h-[19px] w-6" />
        <span className="ml-3">BP_MMLSCharacter</span>
        <Chevron />
        <span>Event Graph</span>
        <span className="w-3.5" />
        <Chevron />
        <span className="ml-2">Inputs</span>
        <span className="ml-auto mr-1 font-bold text-[#303030]">Zoom -10</span>
      </header>
    </div>
  )
}

function Chevron() {
  return (
    <svg viewBox="0 0 8 14" className="mx-2 h-[14px] w-2" fill="none" stroke="#e2e2e2" strokeWidth="1.800">
      <path d="M1 1l6 6-6 6" />
    </svg>
  )
}

const graphTabs = [
  { label: 'Viewport', icon: <ViewportIcon /> },
  { label: 'Construction Script', icon: <FunctionIcon /> },
  { label: 'Inputs', icon: <GraphIcon /> },
  { label: 'Begin Play', icon: <GraphIcon /> },
  { label: 'Camera Component', icon: <FunctionIcon /> },
  { label: 'Inputs', icon: <GraphIcon /> },
  { label: 'Inputs', icon: <GraphIcon />, active: true },
]

function GraphTabs() {
  return (
    <div className="mt-1.5 flex h-[22px] pl-1 pr-12 [text-shadow:1px_1px_1px_#000]">
      {graphTabs.map((tab, i) => (
        <Tab
          key={i}
          icon={tab.icon}
          label={tab.label}
          className={`flex-1 ${tab.active ? 'bg-[#3e3e3e]' : 'border-r border-[#1c1c1c] bg-[#2b2b2b]'}`}
        />
      ))}
    </div>
  )
}

function ResultTabs() {
  return (
    <div className="mt-1 flex h-[18px] items-start gap-0.5 overflow-hidden pl-1 [text-shadow:1px_1px_1px_#000]">
      <Tab
        icon={
          <svg viewBox="0 0 12 14" className="h-[14px] w-3">
            <path d="M0 0h9l3 3v11H0z" fill="#dde5f2" />
            <path d="M2 4l4 3-4 3M6 11h4" stroke="#2f4b83" strokeWidth="1.800" fill="none" />
          </svg>
        }
        label="Compiler Results"
        className="h-[22px] w-[141px] bg-[#333333]"
      />
      <Tab
        icon={
          <svg viewBox="0 0 14 14" className="size-[14px]">
            <circle cx="8" cy="6" r="5" fill="#9fb0c8" stroke="#e4e9f1" strokeWidth="1.500" />
            <path d="M4 10l-3 4" stroke="#8fa5d3" strokeWidth="2.500" />
          </svg>
        }
        label="Find Results"
        className="h-[22px] w-[141px] bg-[#2b2b2b]"
      />
    </div>
  )
}

/* ---------- window chrome ---------- */

function TitleBar() {
  return (
    <div className="flex h-[26px] shrink-0 items-end bg-linear-to-b from-[#3a3a3a] to-[#1e1e1e]">
      <div className="flex h-full w-[34px] items-center">
        <UnrealLogo />
      </div>
      <div className="relative flex h-[25px] w-[195px] items-center pl-4 pr-[17px] text-[#c9c9c9] [text-shadow:1px_1px_1px_#333]">
        <svg viewBox="0 0 195 25" preserveAspectRatio="none" className="absolute inset-0 size-full">
          <defs>
            <linearGradient id="tab" x2="0" y2="1">
              <stop stopColor="#6d6d6d" />
              <stop offset="1" stopColor="#8b8b8b" />
            </linearGradient>
          </defs>
          <path d="M0 25Q6 24 8 14L11 4Q12 0 17 0H178Q183 0 185 4L190 19Q192 24 195 25z" fill="url(#tab)" />
        </svg>
        <span className="relative flex h-[17px] w-4 justify-center bg-[#45618c]">
          <PawnIcon />
        </span>
        <span className="relative ml-[5px] flex-1">BP_MMLSCharacter</span>
        <button aria-label="Close tab" className="relative">
          <Cross className="h-1.5 w-1.5 text-[#4b4b4b]" />
        </button>
      </div>
      <div className="ml-auto flex items-start gap-3 self-start">
        <svg viewBox="0 0 16 16" className="mt-1 size-4">
          <path d="M2 5l7-4 6 4-6 6z" fill="#a9cbe6" />
          <path d="M4 7v5l5 3 4-4V7L9 11z" fill="#5c86ad" />
          <path d="M2 5v9" stroke="#c4ab82" strokeWidth="1.500" />
        </svg>
        <div className="mr-0.5 flex h-[15px] border border-t-0 border-[#9a9a9a]">
          <button aria-label="Minimize" className="flex w-[23px] items-center justify-center border-r border-[#9a9a9a]">
            <span className="mt-1 h-[3px] w-2.5 bg-white" />
          </button>
          <button aria-label="Restore" className="flex w-[22px] items-center justify-center border-r border-[#9a9a9a]">
            <svg viewBox="0 0 10 10" className="size-2.5" fill="none" stroke="#fff" strokeWidth="1.600">
              <path d="M1 3h6v6H1zM3 1h6v6" />
            </svg>
          </button>
          <button aria-label="Close" className="flex w-[37px] items-center justify-center">
            <Cross className="size-2.5 text-white" />
          </button>
        </div>
      </div>
    </div>
  )
}

const menus = ['File', 'Edit', 'Asset', 'View', 'Debug', 'Window', 'Help']

function MenuBar() {
  return (
    <nav className="flex h-5 shrink-0 items-center border-y border-black bg-[#191919] pl-[9px] pr-2 text-[#cfcfcf]">
      <div className="flex gap-[17px]">
        {menus.map((menu) => (
          <button key={menu}>{menu}</button>
        ))}
      </div>
      <span className="ml-auto text-[#8c8c8c]">Parent class:</span>
      <a href="#character" className="ml-1.5 text-[#7fa9e6]">
        Character
      </a>
    </nav>
  )
}

export default function App() {
  return (
    <div className="relative flex h-screen w-full flex-col overflow-hidden bg-[#222222] font-['Roboto',sans-serif] text-[12px] leading-4 text-[#c9c9c9]">
      <TitleBar />
      <MenuBar />
      <div className="flex min-h-0 flex-1 pt-px">
        <aside className="flex w-[210px] shrink-0 flex-col">
          <ComponentsPanel />
          <BlueprintPanel />
        </aside>
        <main className="ml-1 mr-1 flex min-w-0 flex-1 flex-col">
          <Toolbar />
          <GraphTabs />
          <Graph />
          <ResultTabs />
        </main>
        <div className="w-5 shrink-0 overflow-hidden bg-[#3e3e3e] pl-2 pt-[3px]">
          <svg viewBox="0 0 14 14" className="size-[14px]">
            <circle cx="7" cy="7" r="6" fill="#2f3d5d" stroke="#8e9ab3" />
            <path d="M7 6v5M7 3v2" stroke="#fff" strokeWidth="2" />
          </svg>
        </div>
      </div>
      <div className="pointer-events-none absolute -bottom-1.5 -right-1 flex items-baseline whitespace-nowrap font-['Noto_Sans_CJK_SC',sans-serif] text-[100px] font-bold leading-[100px] text-black">
        海盗王
        <span className="font-['DejaVu_Sans_Mono',monospace]">CG</span>
        资源
      </div>
    </div>
  )
}
